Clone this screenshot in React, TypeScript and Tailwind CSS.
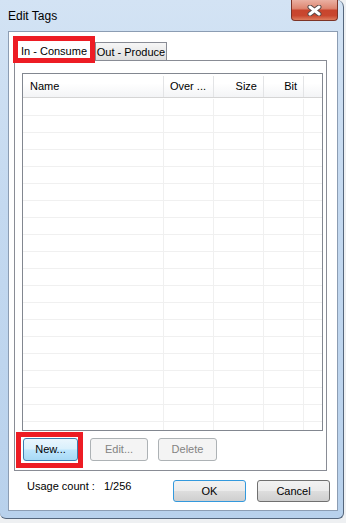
import React from 'react';

const rows = Array.from({ length: 20 });

function CloseGlyph() {
  return (
    <svg width="15" height="11" viewBox="0 0 15 11">
      <path d="M3 2 L12 9 M12 2 L3 9" stroke="#5b4a48" strokeWidth="5" strokeLinecap="round" />
      <path d="M3 2 L12 9 M12 2 L3 9" stroke="#ffffff" strokeWidth="3" strokeLinecap="round" />
    </svg>
  );
}

export default function App() {
  return (
    <div className="w-[346px] h-[523px] bg-[#eef0f2] overflow-hidden" style={{ fontFamily: '"Liberation Sans", Arial, sans-serif' }}>
      {/* window frame */}
      <div className="w-[344px] h-[519px] rounded-tr-[7px] rounded-b-[6px] border-r border-b border-[#55667c] bg-[linear-gradient(to_bottom,#d3e3f4_0%,#c4d9f0_40%,#b8d1ec_100%)]">
        {/* title bar */}
        <div className="h-[31px] flex items-start">
          <span className="pl-[8px] pt-[9px] text-[12px] leading-[14px] text-black">Edit Tags</span>
          <div className="ml-auto mr-[5px] w-[47px] h-[21px] rounded-b-[4px] border border-t-0 border-[#7d3427] bg-[linear-gradient(to_bottom,#eab0a2_0%,#de8671_42%,#c8452e_52%,#c9472f_78%,#dd7d5f_100%)] flex items-center justify-center">
            <CloseGlyph />
          </div>
        </div>

        {/* client area */}
        <div className="ml-[8px] w-[330px] h-[480px] bg-white border border-[#8c9db3] pl-[5px] pt-[8px] text-[11px] text-black">
          {/* tabs */}
          <div className="flex items-end h-[20px]">
            <div className="relative z-10 w-[80px] h-[21px] -mb-px border border-b-0 border-[#898c95] bg-white flex items-center justify-center leading-[13px]">
              In - Consume
              <span className="absolute -left-[2px] -right-[2px] -top-[5px] -bottom-[2px] border-[5px] border-[#ed1c24] pointer-events-none" />
            </div>
            <div className="w-[72px] h-[18px] ml-px border border-b-0 border-[#898c95] bg-[linear-gradient(to_bottom,#f6f6f6_0%,#ebebeb_50%,#dedede_100%)] flex items-center justify-center pt-[2px] leading-[13px]">
              Out - Produce
            </div>
          </div>

          {/* tab panel */}
          <div className="w-[313px] h-[411px] border border-[#898c95] bg-white pl-[7px] pt-[12px]">
            {/* list view */}
            <div className="w-[301px] h-[358px] border border-[#828790] bg-white overflow-hidden flex flex-col">
              <div className="h-[24px] shrink-0 flex border-b border-[#d5d5d5] bg-[linear-gradient(to_bottom,#ffffff_0%,#ffffff_40%,#f3f4f6_100%)] pt-[2px]">
                <div className="w-[141px] border-r border-[#e3e4e6] flex items-center pl-[7px]">Name</div>
                <div className="w-[50px] border-r border-[#e3e4e6] flex items-center justify-end pr-[7px]">Over ...</div>
                <div className="w-[50px] border-r border-[#e3e4e6] flex items-center justify-end pr-[6px]">Size</div>
                <div className="w-[40px] border-r border-[#e3e4e6] flex items-center justify-end pr-[6px]">Bit</div>
                <div className="flex-1" />
              </div>
              <div className="pt-px">
                {rows.map((_, i) => (
                  <div key={i} className="h-[17px] flex border-b border-[#f0f0f0]">
                    <div className="w-[141px] border-r border-[#f0f0f0]" />
                    <div className="w-[50px] border-r border-[#f0f0f0]" />
                    <div className="w-[50px] border-r border-[#f0f0f0]" />
                    <div className="w-[40px] border-r border-[#f0f0f0]" />
                    <div className="flex-1" />
                  </div>
                ))}
              </div>
            </div>

            {/* list buttons */}
            <div className="flex mt-[7px] pl-px">
              <div className="relative">
                <button className="w-[55px] h-[23px] rounded-[3px] border border-[#3c7fb1] bg-[linear-gradient(to_bottom,#eaf6fd_0%,#d9f0fc_48%,#bee6fd_52%,#a7d9f5_100%)] text-black leading-[13px]">
                  New...
                </button>
                <span className="absolute -left-[7px] -right-[5px] -top-[6px] -bottom-[7px] border-[5px] border-[#ed1c24] pointer-events-none" />
              </div>
              <button className="ml-[12px] w-[58px] h-[23px] rounded-[3px] border border-[#adb2b5] bg-[#f4f4f4] text-[#838383] leading-[13px]">
                Edit...
              </button>
              <button className="ml-[10px] w-[59px] h-[23px] rounded-[3px] border border-[#adb2b5] bg-[#f4f4f4] text-[#838383] leading-[13px]">
                Delete
              </button>
            </div>
          </div>

          {/* bottom row */}
          <div className="flex items-start mt-[9px] pl-[13px] pr-[7px]">
            <span className="leading-[13px]">Usage count :</span>
            <span className="leading-[13px] ml-[9px]">1/256</span>
            <button className="ml-auto w-[73px] h-[22px] rounded-[3px] border border-[#3399dd] bg-[linear-gradient(to_bottom,#f2f2f2_0%,#ebebeb_48%,#dddddd_52%,#cfcfcf_100%)] text-black leading-[13px]">
              OK
            </button>
            <button className="ml-[11px] w-[73px] h-[22px] rounded-[3px] border border-[#707070] bg-[linear-gradient(to_bottom,#f2f2f2_0%,#ebebeb_48%,#dddddd_52%,#cfcfcf_100%)] text-black leading-[13px]">
              Cancel
            </button>
          </div>
        </div>
      </div>
    </div>
  );
}
